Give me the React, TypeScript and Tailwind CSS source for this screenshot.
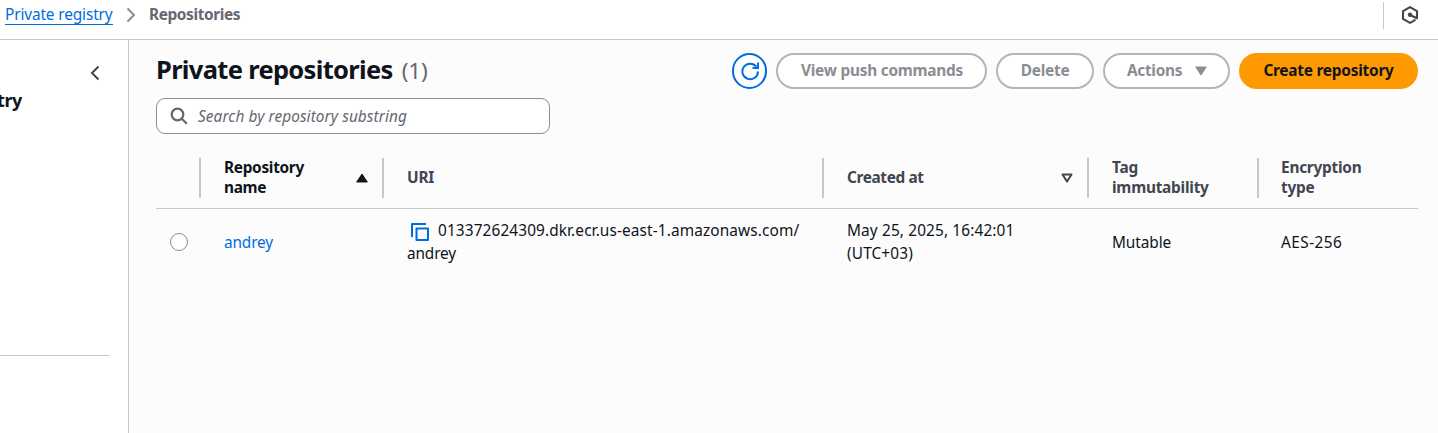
import React from "react";

const columns = "grid grid-cols-[45px_183px_440px_265px_170px_159px] items-center";

function HeaderCell({ children, className = "", last = false }: { children?: React.ReactNode; className?: string; last?: boolean }) {
  return (
    <div className={`flex h-10 items-center justify-between ${last ? "" : "border-r-2 border-[#c6c6cd]"} ${className}`}>
      {children}
    </div>
  );
}

export default function App() {
  return (
    <div className="flex h-[433px] w-[1438px] flex-col overflow-hidden bg-white font-['Noto_Sans',sans-serif] text-[15.4px] text-[#0f141a]">
      <header className="flex h-10 shrink-0 items-center justify-between border-b border-[#c6c6cd] pl-[5px]">
        <nav className="flex items-center pb-[9px] whitespace-nowrap">
          <a className="h-[20px] w-[108px] border-b border-[#006ce0] leading-[19px] tracking-[-0.13px] text-[#006ce0]">Private registry</a>
          <svg className="mb-px ml-[13px]" width="10" height="16" viewBox="0 0 10 16" fill="none" stroke="#8c8c94" strokeWidth="2">
            <path d="M1.5 1.5 8 8l-6.500 6.500" />
          </svg>
          <span className="ml-[13px] leading-[20px] font-bold tracking-[-0.38px] text-[#656871]">Repositories</span>
        </nav>
        <div className="flex h-full items-start pt-0.5 pr-[19px]">
          <div className="mr-[17px] h-[27px] w-px bg-[#c6c6cd]" />
          <svg className="mt-[3px]" width="18" height="20" viewBox="0 0 18 20" fill="none" stroke="#424650" strokeWidth="2.100">
            <path d="M12.800 15.800 9 17.900 2 13.900V6.100l7-4 7 4v7.200L9 10" strokeLinejoin="round" />
            <path d="m12.500 15.900 2-1.200" />
            <circle cx="9" cy="9.800" r="2.200" fill="#424650" stroke="none" />
          </svg>
        </div>
      </header>
      <div className="flex min-h-0 flex-1">
        <aside className="flex w-[129px] shrink-0 flex-col border-r border-[#c6c6cd] pt-[25px]">
          <svg className="ml-[89px]" width="12" height="16" viewBox="0 0 12 16" fill="none" stroke="#424650" strokeWidth="2">
            <path d="M9.500 1.500 3 8l6.500 6.500" />
          </svg>
          <div className="mt-[8px] flex h-[24px] w-[22px] justify-end overflow-hidden text-[18px] leading-[22px] font-bold tracking-[-0.4px] whitespace-nowrap">
            registry
          </div>
          <div className="mt-[242px] h-px w-[110px] bg-[#c6c6cd]" />
        </aside>
        <main className="flex-1 bg-[#fcfcfd] pt-[13px] pl-[27px]">
          <div className="flex h-9 w-[1262px] items-center justify-between whitespace-nowrap">
            <h1 className="-mt-[3px] flex items-baseline text-[25.5px] leading-[36px] font-bold tracking-[-0.68px]">
              Private repositories
              <span className="ml-[9px] text-[22.5px] font-normal tracking-[-0.2px] text-[#656871]">(1)</span>
            </h1>
            <div className="flex gap-[9px] font-bold tracking-[-0.23px]">
              <button className="flex h-9 w-[35px] items-center justify-center rounded-full border-2 border-[#006ce0] bg-white">
                <svg className="shrink-0" width="20" height="20" viewBox="0 0 20 20" fill="none" stroke="#006ce0" strokeWidth="2">
                  <path d="M18 10.500A7.800 7.800 0 1 1 16.300 5.600M18 1.500v5.500h-5.500" />
                </svg>
              </button>
              <button className="h-9 w-[211px] rounded-full border-2 border-[#b4b4bb] bg-white pl-px text-[#8c8c94]">View push commands</button>
              <button className="h-9 w-[98px] rounded-full border-2 border-[#b4b4bb] bg-white text-[#8c8c94]">Delete</button>
              <button className="flex h-9 w-[127px] items-center rounded-full border-2 border-[#b4b4bb] bg-white pl-[22px] text-[#8c8c94]">
                <span className="w-[55px] text-left tracking-[-0.3px]">Actions</span>
                <svg className="ml-[13px]" width="12" height="10" viewBox="0 0 12 10" fill="#8c8c94" stroke="#8c8c94" strokeLinejoin="round">
                  <path d="M.8 1h10.400L6 9z" />
                </svg>
              </button>
              <button className="h-9 w-[179px] rounded-full bg-[#ff9900]">Create repository</button>
            </div>
          </div>
          <div className="mt-[9px] flex h-9 w-[394px] items-center rounded-[9px] border border-[#8c8c94] bg-white pl-[13px] text-[#656871]">
            <svg width="18" height="18" viewBox="0 0 18 18" fill="none" stroke="#656871" strokeWidth="2.200">
              <circle cx="7.500" cy="7.500" r="5.800" />
              <path d="m11.800 11.800 5 5" />
            </svg>
            <span className="mt-[2px] ml-[10px] tracking-[0.08px] italic">Search by repository substring</span>
          </div>
          <section className="mt-[14px] w-[1262px]">
            <div className={`${columns} h-[61px] border-b border-[#c6c6cd] leading-[20px] font-bold tracking-[-0.24px] text-[#424650]`}>
              <HeaderCell />
              <HeaderCell className="pr-[14px] pl-[23px] text-[#0f141a]">
                <span className="tracking-[-0.3px]">Repository<br />name</span>
                <svg className="mb-px" width="12" height="10" viewBox="0 0 12 10" fill="#0f141a" stroke="#0f141a" strokeLinejoin="round">
                  <path d="M6 1l5.300 8H.7z" />
                </svg>
              </HeaderCell>
              <HeaderCell className="pl-[23px]">URI</HeaderCell>
              <HeaderCell className="pr-[14px] pl-[23px]">
                <span className="tracking-[-0.38px]">Created at</span>
                <svg className="mb-px" width="12" height="10" viewBox="0 0 12 10" fill="none" stroke="#424650" strokeWidth="2" strokeLinejoin="round">
                  <path d="M1.500 1.500h9L6 8.500z" />
                </svg>
              </HeaderCell>
              <HeaderCell className="pl-[23px]"><span>Tag<br />immutability</span></HeaderCell>
              <HeaderCell className="pl-[22px]" last><span>Encryption<br />type</span></HeaderCell>
            </div>
            <div className={`${columns} h-[66px] leading-[23px] whitespace-nowrap`}>
              <div className="ml-[14px] size-[18px] rounded-full border border-[#8c8c94] bg-white" />
              <a className="pl-[23px] tracking-[-0.15px] text-[#006ce0]">andrey</a>
              <div className="pl-[23px]">
                <div className="flex items-center">
                  <svg className="mt-[3px] ml-[4px]" width="18" height="18" viewBox="0 0 18 18" fill="none" stroke="#006ce0" strokeWidth="2">
                    <path d="M1 14V1h14M5.500 5.500h11.500v11.500H5.500z" strokeLinejoin="round" />
                  </svg>
                  <span className="ml-[9px] tracking-[0.11px]">013372624309.dkr.ecr.us-east-1.amazonaws.com/</span>
                </div>
                <div className="tracking-[-0.15px]">andrey</div>
              </div>
              <div className="pl-[23px] tracking-[0.13px]">May 25, 2025, 16:42:01<br />(UTC+03)</div>
              <div className="pl-[23px] tracking-[-0.1px]">Mutable</div>
              <div className="pl-[22px] tracking-[0.45px]">AES-256</div>
            </div>
          </section>
        </main>
      </div>
    </div>
  );
}
